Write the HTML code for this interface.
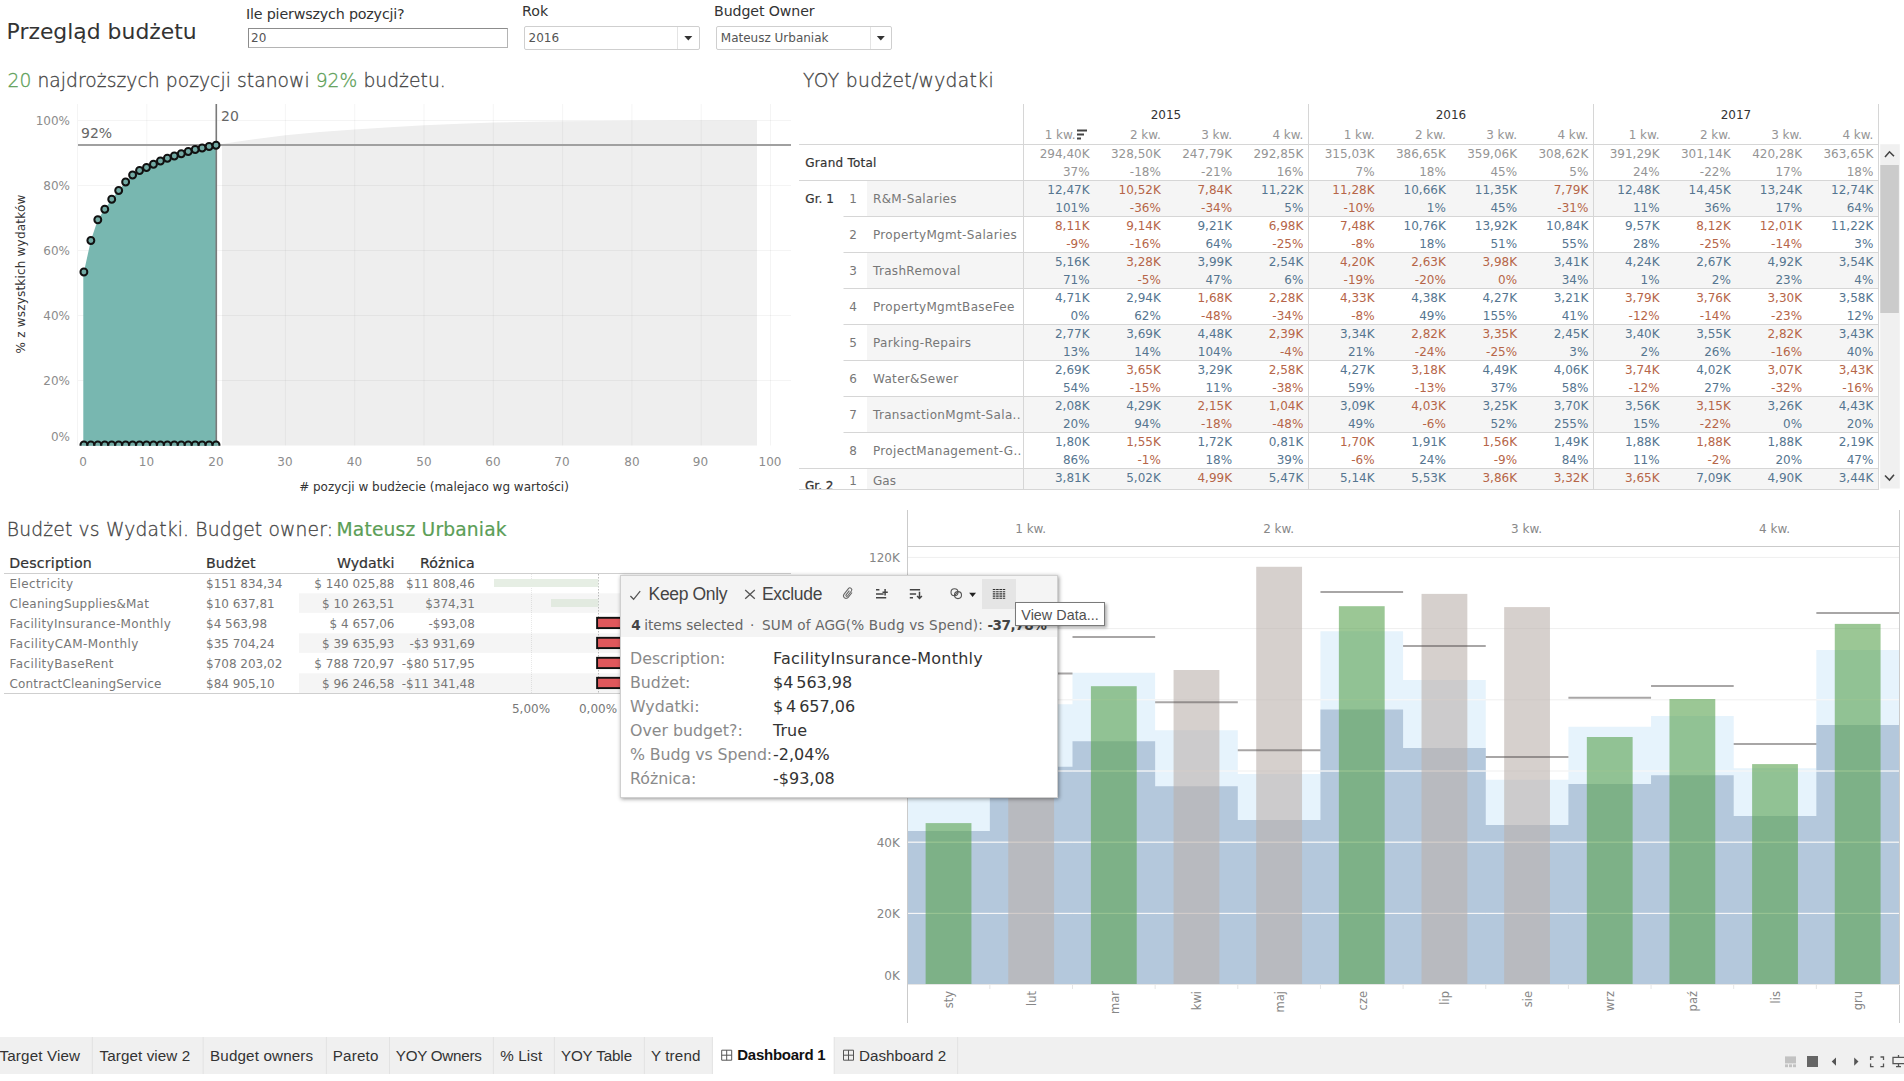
<!DOCTYPE html>
<html lang="pl"><head><meta charset="utf-8"><title>Przegląd budżetu</title>
<style>
html,body{margin:0;padding:0;background:#fff;}
body{width:1904px;height:1081px;position:relative;overflow:hidden;font-family:"DejaVu Sans","Liberation Sans",sans-serif;}
#page{position:absolute;left:0;top:0;width:1904px;height:1081px;overflow:hidden;}
#page div{position:absolute;white-space:pre;}
svg.layer{position:absolute;left:0;top:0;}
</style></head><body>
<div id="page">
<svg class="layer" width="1904" height="1081" viewBox="0 0 1904 1081">
<path d="M684.3 36 h8 l-4 4.6 z" fill="#333"/>
<path d="M876.8 36 h8 l-4 4.6 z" fill="#333"/>
<path d="M222 445.5 L222 144.1 L240 141.3 L260 138.5 L285.5 135.3 L320 132.1 L354.5 129.4 L390 127.2 L424.5 125.3 L460 123.7 L494 122.6 L530 121.8 L563 121.2 L632 120.7 L700 120.5 L757 120.4 L757 445.5 Z" fill="#eeeeee"/>
<line x1="77.50" y1="104.00" x2="77.50" y2="445.50" stroke="#000" stroke-width="1" stroke-opacity="0.045"/>
<line x1="146.80" y1="104.00" x2="146.80" y2="445.50" stroke="#000" stroke-width="1" stroke-opacity="0.045"/>
<line x1="216.10" y1="104.00" x2="216.10" y2="445.50" stroke="#000" stroke-width="1" stroke-opacity="0.045"/>
<line x1="285.40" y1="104.00" x2="285.40" y2="445.50" stroke="#000" stroke-width="1" stroke-opacity="0.045"/>
<line x1="354.70" y1="104.00" x2="354.70" y2="445.50" stroke="#000" stroke-width="1" stroke-opacity="0.045"/>
<line x1="424.00" y1="104.00" x2="424.00" y2="445.50" stroke="#000" stroke-width="1" stroke-opacity="0.045"/>
<line x1="493.30" y1="104.00" x2="493.30" y2="445.50" stroke="#000" stroke-width="1" stroke-opacity="0.045"/>
<line x1="562.60" y1="104.00" x2="562.60" y2="445.50" stroke="#000" stroke-width="1" stroke-opacity="0.045"/>
<line x1="631.90" y1="104.00" x2="631.90" y2="445.50" stroke="#000" stroke-width="1" stroke-opacity="0.045"/>
<line x1="701.20" y1="104.00" x2="701.20" y2="445.50" stroke="#000" stroke-width="1" stroke-opacity="0.045"/>
<line x1="770.50" y1="104.00" x2="770.50" y2="445.50" stroke="#000" stroke-width="1" stroke-opacity="0.045"/>
<line x1="78.00" y1="120.50" x2="791.00" y2="120.50" stroke="#000" stroke-width="1" stroke-opacity="0.045"/>
<line x1="78.00" y1="185.50" x2="791.00" y2="185.50" stroke="#000" stroke-width="1" stroke-opacity="0.045"/>
<line x1="78.00" y1="250.50" x2="791.00" y2="250.50" stroke="#000" stroke-width="1" stroke-opacity="0.045"/>
<line x1="78.00" y1="315.50" x2="791.00" y2="315.50" stroke="#000" stroke-width="1" stroke-opacity="0.045"/>
<line x1="78.00" y1="380.50" x2="791.00" y2="380.50" stroke="#000" stroke-width="1" stroke-opacity="0.045"/>
<path d="M83.3 445.5 L83.3 272.00 L83.90 272.00 L90.86 240.50 L97.81 219.75 L104.77 209.25 L111.72 199.25 L118.68 190.50 L125.63 182.00 L132.59 175.00 L139.54 170.50 L146.50 167.50 L153.45 164.25 L160.41 161.00 L167.36 158.25 L174.31 156.00 L181.27 153.75 L188.23 151.50 L195.18 149.50 L202.13 148.00 L209.09 146.50 L216.05 145.25 L216.5 445.5 Z" fill="#78b7b0"/>
<line x1="78.00" y1="145.00" x2="791.00" y2="145.00" stroke="#a0a0a0" stroke-width="2" />
<line x1="216.30" y1="104.00" x2="216.30" y2="445.50" stroke="#7a7a7a" stroke-width="1.6" />
<clipPath id="pc"><rect x="70" y="100" width="730" height="345.8"/></clipPath>
<g clip-path="url(#pc)" fill="#72aaa4" stroke="#111" stroke-width="2"><circle cx="83.90" cy="272.00" r="3.45"/><circle cx="90.86" cy="240.50" r="3.45"/><circle cx="97.81" cy="219.75" r="3.45"/><circle cx="104.77" cy="209.25" r="3.45"/><circle cx="111.72" cy="199.25" r="3.45"/><circle cx="118.68" cy="190.50" r="3.45"/><circle cx="125.63" cy="182.00" r="3.45"/><circle cx="132.59" cy="175.00" r="3.45"/><circle cx="139.54" cy="170.50" r="3.45"/><circle cx="146.50" cy="167.50" r="3.45"/><circle cx="153.45" cy="164.25" r="3.45"/><circle cx="160.41" cy="161.00" r="3.45"/><circle cx="167.36" cy="158.25" r="3.45"/><circle cx="174.31" cy="156.00" r="3.45"/><circle cx="181.27" cy="153.75" r="3.45"/><circle cx="188.23" cy="151.50" r="3.45"/><circle cx="195.18" cy="149.50" r="3.45"/><circle cx="202.13" cy="148.00" r="3.45"/><circle cx="209.09" cy="146.50" r="3.45"/><circle cx="216.05" cy="145.25" r="3.45"/><circle cx="83.90" cy="444.9" r="3.45"/><circle cx="90.86" cy="444.9" r="3.45"/><circle cx="97.81" cy="444.9" r="3.45"/><circle cx="104.77" cy="444.9" r="3.45"/><circle cx="111.72" cy="444.9" r="3.45"/><circle cx="118.68" cy="444.9" r="3.45"/><circle cx="125.63" cy="444.9" r="3.45"/><circle cx="132.59" cy="444.9" r="3.45"/><circle cx="139.54" cy="444.9" r="3.45"/><circle cx="146.50" cy="444.9" r="3.45"/><circle cx="153.45" cy="444.9" r="3.45"/><circle cx="160.41" cy="444.9" r="3.45"/><circle cx="167.36" cy="444.9" r="3.45"/><circle cx="174.31" cy="444.9" r="3.45"/><circle cx="181.27" cy="444.9" r="3.45"/><circle cx="188.23" cy="444.9" r="3.45"/><circle cx="195.18" cy="444.9" r="3.45"/><circle cx="202.13" cy="444.9" r="3.45"/><circle cx="209.09" cy="444.9" r="3.45"/><circle cx="216.05" cy="444.9" r="3.45"/></g>
<rect x="867.00" y="180.50" width="1011.50" height="36.00" fill="#f5f5f5" />
<rect x="867.00" y="252.50" width="1011.50" height="36.00" fill="#f5f5f5" />
<rect x="867.00" y="324.50" width="1011.50" height="36.00" fill="#f5f5f5" />
<rect x="867.00" y="396.50" width="1011.50" height="36.00" fill="#f5f5f5" />
<rect x="867.00" y="468.50" width="1011.50" height="20.50" fill="#f5f5f5" />
<line x1="799.00" y1="144.50" x2="1878.50" y2="144.50" stroke="#d6d6d6" stroke-width="1" />
<line x1="799.00" y1="180.50" x2="1878.50" y2="180.50" stroke="#d6d6d6" stroke-width="1" />
<line x1="843.50" y1="216.50" x2="1878.50" y2="216.50" stroke="#d6d6d6" stroke-width="1" />
<line x1="843.50" y1="252.50" x2="1878.50" y2="252.50" stroke="#d6d6d6" stroke-width="1" />
<line x1="843.50" y1="288.50" x2="1878.50" y2="288.50" stroke="#d6d6d6" stroke-width="1" />
<line x1="843.50" y1="324.50" x2="1878.50" y2="324.50" stroke="#d6d6d6" stroke-width="1" />
<line x1="843.50" y1="360.50" x2="1878.50" y2="360.50" stroke="#d6d6d6" stroke-width="1" />
<line x1="843.50" y1="396.50" x2="1878.50" y2="396.50" stroke="#d6d6d6" stroke-width="1" />
<line x1="843.50" y1="432.50" x2="1878.50" y2="432.50" stroke="#d6d6d6" stroke-width="1" />
<line x1="799.00" y1="468.50" x2="1878.50" y2="468.50" stroke="#d6d6d6" stroke-width="1" />
<line x1="799.00" y1="489.50" x2="1879.00" y2="489.50" stroke="#d6d6d6" stroke-width="1" />
<line x1="1023.50" y1="104.00" x2="1023.50" y2="489.00" stroke="#d6d6d6" stroke-width="1" />
<line x1="1308.50" y1="104.00" x2="1308.50" y2="489.00" stroke="#d6d6d6" stroke-width="1" />
<line x1="1593.50" y1="104.00" x2="1593.50" y2="489.00" stroke="#d6d6d6" stroke-width="1" />
<line x1="1878.50" y1="104.00" x2="1878.50" y2="489.00" stroke="#d6d6d6" stroke-width="1" />
<path d="M1077 130.5h10M1077 134.5h7M1077 138.5h4" stroke="#444" stroke-width="1.8" fill="none"/>
<rect x="1880.20" y="144.20" width="19.60" height="344.30" fill="#f0f0f0" />
<rect x="1880.30" y="165.00" width="18.60" height="148.00" fill="#cbcbcb" />
<path d="M1885 157l4.5-5.2 4.5 4.5M1885 475.5l4.5 4.5 4.5-5.2" stroke="#444" stroke-width="1.6" fill="none"/>
<rect x="299.00" y="593.30" width="492.00" height="19.60" fill="#f5f5f5" />
<rect x="299.00" y="633.30" width="492.00" height="19.60" fill="#f5f5f5" />
<rect x="299.00" y="673.30" width="492.00" height="19.60" fill="#f5f5f5" />
<line x1="531.50" y1="574.00" x2="531.50" y2="693.00" stroke="#000" stroke-width="1" stroke-opacity="0.09" stroke-dasharray="1 1"/>
<line x1="598.50" y1="574.00" x2="598.50" y2="693.00" stroke="#bbb" stroke-width="1" stroke-dasharray="1.5 1.5"/>
<line x1="4.00" y1="573.50" x2="791.00" y2="573.50" stroke="#cfcfcf" stroke-width="1" />
<line x1="4.00" y1="693.50" x2="791.00" y2="693.50" stroke="#cfcfcf" stroke-width="1" />
<rect x="494.00" y="579.00" width="104.30" height="8.00" fill="#e6eee4" />
<rect x="551.00" y="599.00" width="47.30" height="8.00" fill="#e2eae0" />
<rect x="597.1" y="617.8" width="40" height="10.3" fill="#e0585c" stroke="#111" stroke-width="1.9"/>
<rect x="597.1" y="637.8" width="40" height="10.3" fill="#e0585c" stroke="#111" stroke-width="1.9"/>
<rect x="597.1" y="657.8" width="40" height="10.3" fill="#e0585c" stroke="#111" stroke-width="1.9"/>
<rect x="597.1" y="677.8" width="40" height="10.3" fill="#e0585c" stroke="#111" stroke-width="1.9"/>
<path d="M907.20 984.00 L907.20 797.00 L989.85 797.00 L989.85 704.30 L1072.50 704.30 L1072.50 672.80 L1155.15 672.80 L1155.15 730.20 L1237.80 730.20 L1237.80 774.00 L1320.45 774.00 L1320.45 631.20 L1403.10 631.20 L1403.10 680.00 L1485.75 680.00 L1485.75 779.80 L1568.40 779.80 L1568.40 726.80 L1651.05 726.80 L1651.05 716.00 L1733.70 716.00 L1733.70 768.20 L1816.35 768.20 L1816.35 650.00 L1899.00 650.00 L1899.00 984.00 Z" fill="#e6f3fc"/>
<path d="M907.20 984.00 L907.20 831.10 L989.85 831.10 L989.85 766.70 L1072.50 766.70 L1072.50 741.30 L1155.15 741.30 L1155.15 786.20 L1237.80 786.20 L1237.80 820.00 L1320.45 820.00 L1320.45 709.40 L1403.10 709.40 L1403.10 748.00 L1485.75 748.00 L1485.75 825.00 L1568.40 825.00 L1568.40 784.00 L1651.05 784.00 L1651.05 775.20 L1733.70 775.20 L1733.70 815.90 L1816.35 815.90 L1816.35 724.90 L1899.00 724.90 L1899.00 984.00 Z" fill="#b4c8dc"/>
<line x1="907.20" y1="913.40" x2="1899.00" y2="913.40" stroke="#efefef" stroke-width="1" />
<line x1="907.20" y1="913.40" x2="989.85" y2="913.40" stroke="#ffffff" stroke-width="1" stroke-opacity="0.62"/>
<line x1="989.85" y1="913.40" x2="1072.50" y2="913.40" stroke="#ffffff" stroke-width="1" stroke-opacity="0.62"/>
<line x1="1072.50" y1="913.40" x2="1155.15" y2="913.40" stroke="#ffffff" stroke-width="1" stroke-opacity="0.62"/>
<line x1="1155.15" y1="913.40" x2="1237.80" y2="913.40" stroke="#ffffff" stroke-width="1" stroke-opacity="0.62"/>
<line x1="1237.80" y1="913.40" x2="1320.45" y2="913.40" stroke="#ffffff" stroke-width="1" stroke-opacity="0.62"/>
<line x1="1320.45" y1="913.40" x2="1403.10" y2="913.40" stroke="#ffffff" stroke-width="1" stroke-opacity="0.62"/>
<line x1="1403.10" y1="913.40" x2="1485.75" y2="913.40" stroke="#ffffff" stroke-width="1" stroke-opacity="0.62"/>
<line x1="1485.75" y1="913.40" x2="1568.40" y2="913.40" stroke="#ffffff" stroke-width="1" stroke-opacity="0.62"/>
<line x1="1568.40" y1="913.40" x2="1651.05" y2="913.40" stroke="#ffffff" stroke-width="1" stroke-opacity="0.62"/>
<line x1="1651.05" y1="913.40" x2="1733.70" y2="913.40" stroke="#ffffff" stroke-width="1" stroke-opacity="0.62"/>
<line x1="1733.70" y1="913.40" x2="1816.35" y2="913.40" stroke="#ffffff" stroke-width="1" stroke-opacity="0.62"/>
<line x1="1816.35" y1="913.40" x2="1899.00" y2="913.40" stroke="#ffffff" stroke-width="1" stroke-opacity="0.62"/>
<line x1="907.20" y1="842.20" x2="1899.00" y2="842.20" stroke="#efefef" stroke-width="1" />
<line x1="907.20" y1="842.20" x2="989.85" y2="842.20" stroke="#ffffff" stroke-width="1" stroke-opacity="0.62"/>
<line x1="989.85" y1="842.20" x2="1072.50" y2="842.20" stroke="#ffffff" stroke-width="1" stroke-opacity="0.62"/>
<line x1="1072.50" y1="842.20" x2="1155.15" y2="842.20" stroke="#ffffff" stroke-width="1" stroke-opacity="0.62"/>
<line x1="1155.15" y1="842.20" x2="1237.80" y2="842.20" stroke="#ffffff" stroke-width="1" stroke-opacity="0.62"/>
<line x1="1237.80" y1="842.20" x2="1320.45" y2="842.20" stroke="#ffffff" stroke-width="1" stroke-opacity="0.62"/>
<line x1="1320.45" y1="842.20" x2="1403.10" y2="842.20" stroke="#ffffff" stroke-width="1" stroke-opacity="0.62"/>
<line x1="1403.10" y1="842.20" x2="1485.75" y2="842.20" stroke="#ffffff" stroke-width="1" stroke-opacity="0.62"/>
<line x1="1485.75" y1="842.20" x2="1568.40" y2="842.20" stroke="#ffffff" stroke-width="1" stroke-opacity="0.62"/>
<line x1="1568.40" y1="842.20" x2="1651.05" y2="842.20" stroke="#ffffff" stroke-width="1" stroke-opacity="0.62"/>
<line x1="1651.05" y1="842.20" x2="1733.70" y2="842.20" stroke="#ffffff" stroke-width="1" stroke-opacity="0.62"/>
<line x1="1733.70" y1="842.20" x2="1816.35" y2="842.20" stroke="#ffffff" stroke-width="1" stroke-opacity="0.62"/>
<line x1="1816.35" y1="842.20" x2="1899.00" y2="842.20" stroke="#ffffff" stroke-width="1" stroke-opacity="0.62"/>
<line x1="907.20" y1="771.00" x2="1899.00" y2="771.00" stroke="#efefef" stroke-width="1" />
<line x1="989.85" y1="771.00" x2="1072.50" y2="771.00" stroke="#ffffff" stroke-width="1" stroke-opacity="0.62"/>
<line x1="1072.50" y1="771.00" x2="1155.15" y2="771.00" stroke="#ffffff" stroke-width="1" stroke-opacity="0.62"/>
<line x1="1155.15" y1="771.00" x2="1237.80" y2="771.00" stroke="#ffffff" stroke-width="1" stroke-opacity="0.62"/>
<line x1="1320.45" y1="771.00" x2="1403.10" y2="771.00" stroke="#ffffff" stroke-width="1" stroke-opacity="0.62"/>
<line x1="1403.10" y1="771.00" x2="1485.75" y2="771.00" stroke="#ffffff" stroke-width="1" stroke-opacity="0.62"/>
<line x1="1568.40" y1="771.00" x2="1651.05" y2="771.00" stroke="#ffffff" stroke-width="1" stroke-opacity="0.62"/>
<line x1="1651.05" y1="771.00" x2="1733.70" y2="771.00" stroke="#ffffff" stroke-width="1" stroke-opacity="0.62"/>
<line x1="1733.70" y1="771.00" x2="1816.35" y2="771.00" stroke="#ffffff" stroke-width="1" stroke-opacity="0.62"/>
<line x1="1816.35" y1="771.00" x2="1899.00" y2="771.00" stroke="#ffffff" stroke-width="1" stroke-opacity="0.62"/>
<line x1="907.20" y1="699.80" x2="1899.00" y2="699.80" stroke="#efefef" stroke-width="1" />
<line x1="1072.50" y1="699.80" x2="1155.15" y2="699.80" stroke="#ffffff" stroke-width="1" stroke-opacity="0.62"/>
<line x1="1320.45" y1="699.80" x2="1403.10" y2="699.80" stroke="#ffffff" stroke-width="1" stroke-opacity="0.62"/>
<line x1="1403.10" y1="699.80" x2="1485.75" y2="699.80" stroke="#ffffff" stroke-width="1" stroke-opacity="0.62"/>
<line x1="1816.35" y1="699.80" x2="1899.00" y2="699.80" stroke="#ffffff" stroke-width="1" stroke-opacity="0.62"/>
<line x1="907.20" y1="628.60" x2="1899.00" y2="628.60" stroke="#efefef" stroke-width="1" />
<line x1="907.20" y1="557.40" x2="1899.00" y2="557.40" stroke="#efefef" stroke-width="1" />
<rect x="925.63" y="823.10" width="45.80" height="160.90" fill="#59a14f" fill-opacity="0.6"/>
<rect x="1008.27" y="690.00" width="45.80" height="294.00" fill="#bab0ac" fill-opacity="0.6"/>
<line x1="989.85" y1="673.50" x2="1072.50" y2="673.50" stroke="#4a4444" stroke-width="2" stroke-opacity="0.48"/>
<rect x="1090.92" y="686.20" width="45.80" height="297.80" fill="#59a14f" fill-opacity="0.6"/>
<line x1="1072.50" y1="636.90" x2="1155.15" y2="636.90" stroke="#4a4444" stroke-width="2" stroke-opacity="0.48"/>
<rect x="1173.58" y="670.00" width="45.80" height="314.00" fill="#bab0ac" fill-opacity="0.6"/>
<line x1="1155.15" y1="702.20" x2="1237.80" y2="702.20" stroke="#4a4444" stroke-width="2" stroke-opacity="0.48"/>
<rect x="1256.23" y="566.80" width="45.80" height="417.20" fill="#bab0ac" fill-opacity="0.6"/>
<line x1="1237.80" y1="750.20" x2="1320.45" y2="750.20" stroke="#4a4444" stroke-width="2" stroke-opacity="0.48"/>
<rect x="1338.88" y="606.20" width="45.80" height="377.80" fill="#59a14f" fill-opacity="0.6"/>
<line x1="1320.45" y1="592.00" x2="1403.10" y2="592.00" stroke="#4a4444" stroke-width="2" stroke-opacity="0.48"/>
<rect x="1421.53" y="593.90" width="45.80" height="390.10" fill="#bab0ac" fill-opacity="0.6"/>
<line x1="1403.10" y1="646.10" x2="1485.75" y2="646.10" stroke="#4a4444" stroke-width="2" stroke-opacity="0.48"/>
<rect x="1504.17" y="607.10" width="45.80" height="376.90" fill="#bab0ac" fill-opacity="0.6"/>
<line x1="1485.75" y1="757.00" x2="1568.40" y2="757.00" stroke="#4a4444" stroke-width="2" stroke-opacity="0.48"/>
<rect x="1586.83" y="737.00" width="45.80" height="247.00" fill="#59a14f" fill-opacity="0.6"/>
<line x1="1568.40" y1="697.80" x2="1651.05" y2="697.80" stroke="#4a4444" stroke-width="2" stroke-opacity="0.48"/>
<rect x="1669.48" y="699.00" width="45.80" height="285.00" fill="#59a14f" fill-opacity="0.6"/>
<line x1="1651.05" y1="686.00" x2="1733.70" y2="686.00" stroke="#4a4444" stroke-width="2" stroke-opacity="0.48"/>
<rect x="1752.12" y="764.10" width="45.80" height="219.90" fill="#59a14f" fill-opacity="0.6"/>
<line x1="1733.70" y1="744.10" x2="1816.35" y2="744.10" stroke="#4a4444" stroke-width="2" stroke-opacity="0.48"/>
<rect x="1834.78" y="623.90" width="45.80" height="360.10" fill="#59a14f" fill-opacity="0.6"/>
<line x1="1816.35" y1="613.10" x2="1899.00" y2="613.10" stroke="#4a4444" stroke-width="2" stroke-opacity="0.48"/>
<line x1="907.50" y1="510.00" x2="907.50" y2="1023.00" stroke="#cbcbcb" stroke-width="1" />
<line x1="908.00" y1="546.50" x2="1900.00" y2="546.50" stroke="#cbcbcb" stroke-width="1" />
<line x1="1899.50" y1="510.00" x2="1899.50" y2="1023.00" stroke="#cbcbcb" stroke-width="1" />
<line x1="908.00" y1="984.50" x2="1900.00" y2="984.50" stroke="#e6e6e6" stroke-width="1" />
<line x1="989.85" y1="984.50" x2="989.85" y2="989.00" stroke="#e6e6e6" stroke-width="1" />
<line x1="1072.50" y1="984.50" x2="1072.50" y2="989.00" stroke="#e6e6e6" stroke-width="1" />
<line x1="1155.15" y1="984.50" x2="1155.15" y2="989.00" stroke="#e6e6e6" stroke-width="1" />
<line x1="1237.80" y1="984.50" x2="1237.80" y2="989.00" stroke="#e6e6e6" stroke-width="1" />
<line x1="1320.45" y1="984.50" x2="1320.45" y2="989.00" stroke="#e6e6e6" stroke-width="1" />
<line x1="1403.10" y1="984.50" x2="1403.10" y2="989.00" stroke="#e6e6e6" stroke-width="1" />
<line x1="1485.75" y1="984.50" x2="1485.75" y2="989.00" stroke="#e6e6e6" stroke-width="1" />
<line x1="1568.40" y1="984.50" x2="1568.40" y2="989.00" stroke="#e6e6e6" stroke-width="1" />
<line x1="1651.05" y1="984.50" x2="1651.05" y2="989.00" stroke="#e6e6e6" stroke-width="1" />
<line x1="1733.70" y1="984.50" x2="1733.70" y2="989.00" stroke="#e6e6e6" stroke-width="1" />
<line x1="1816.35" y1="984.50" x2="1816.35" y2="989.00" stroke="#e6e6e6" stroke-width="1" />
<rect x="0.00" y="1037.00" width="1904.00" height="37.00" fill="#f0f0f0" />
<rect x="712.40" y="1037.00" width="121.80" height="37.00" fill="#ffffff" />
<line x1="92.30" y1="1037.00" x2="92.30" y2="1074.00" stroke="#e2e2e2" stroke-width="1" />
<line x1="203.20" y1="1037.00" x2="203.20" y2="1074.00" stroke="#e2e2e2" stroke-width="1" />
<line x1="326.40" y1="1037.00" x2="326.40" y2="1074.00" stroke="#e2e2e2" stroke-width="1" />
<line x1="389.50" y1="1037.00" x2="389.50" y2="1074.00" stroke="#e2e2e2" stroke-width="1" />
<line x1="493.40" y1="1037.00" x2="493.40" y2="1074.00" stroke="#e2e2e2" stroke-width="1" />
<line x1="554.40" y1="1037.00" x2="554.40" y2="1074.00" stroke="#e2e2e2" stroke-width="1" />
<line x1="644.40" y1="1037.00" x2="644.40" y2="1074.00" stroke="#e2e2e2" stroke-width="1" />
<line x1="712.40" y1="1037.00" x2="712.40" y2="1074.00" stroke="#e2e2e2" stroke-width="1" />
<line x1="834.20" y1="1037.00" x2="834.20" y2="1074.00" stroke="#e2e2e2" stroke-width="1" />
<line x1="957.70" y1="1037.00" x2="957.70" y2="1074.00" stroke="#e2e2e2" stroke-width="1" />
<path d="M721.7 1050.2h10v10h-10zM726.7 1050.2v10M721.7 1055.2h10" fill="none" stroke="#555" stroke-width="1"/>
<path d="M843.5 1050.2h10v10h-10zM848.5 1050.2v10M843.5 1055.2h10" fill="none" stroke="#555" stroke-width="1"/>
<rect x="1785.00" y="1056.40" width="11.00" height="7.00" fill="#c2c2c2" />
<rect x="1785.00" y="1064.40" width="3.00" height="2.80" fill="#c2c2c2" />
<rect x="1789.00" y="1064.40" width="3.00" height="2.80" fill="#c2c2c2" />
<rect x="1793.00" y="1064.40" width="3.00" height="2.80" fill="#c2c2c2" />
<rect x="1807.00" y="1056.00" width="11.00" height="11.00" fill="#666" />
<path d="M1836 1057.4v8.4l-4.3-4.2zM1854.2 1057.4v8.4l4.3-4.2z" fill="#555"/>
<path d="M1870.6 1060v-3h3M1880.5 1057h3v3M1883.5 1063.6v3h-3M1873.6 1066.6h-3v-3" fill="none" stroke="#555" stroke-width="1.3"/>
<path d="M1893 1057.3h12v6.4h-12zM1898.5 1055v2M1898.5 1063.7v2.8M1896 1066.6h5" fill="none" stroke="#555" stroke-width="1.3"/>
</svg>
<div style="top:16.50px;line-height:30px;font-size:21.9px;color:#333333;left:6.60px;">Przegląd budżetu</div>
<div style="top:4.00px;line-height:20px;font-size:14.3px;color:#333333;left:246.00px;letter-spacing:-0.196px;">Ile pierwszych pozycji?</div>
<div style="left:247.5px;top:28px;width:258px;height:18px;border:1px solid #b4b4b4;border-top-color:#8c8c8c;border-left-color:#8c8c8c;box-sizing:content-box;background:#fff"></div>
<div style="top:28.00px;line-height:20px;font-size:12px;color:#555;left:251.00px;">20</div>
<div style="top:0.50px;line-height:20px;font-size:14.2px;color:#333333;left:522.00px;">Rok</div>
<div style="top:0.50px;line-height:20px;font-size:14.2px;color:#333333;left:714.00px;letter-spacing:-0.106px;">Budget Owner</div>
<div style="left:524px;top:25.5px;width:173.5px;height:22px;border:1px solid #cfcfcf;border-radius:2px"></div>
<div style="left:677.0px;top:26.5px;width:1px;height:22px;background:#e4e4e4"></div>
<div style="top:28.00px;line-height:20px;font-size:12px;color:#555;left:528.50px;">2016</div>
<div style="left:716.3px;top:25.5px;width:173.70000000000005px;height:22px;border:1px solid #cfcfcf;border-radius:2px"></div>
<div style="left:869.5px;top:26.5px;width:1px;height:22px;background:#e4e4e4"></div>
<div style="top:28.00px;line-height:20px;font-size:12px;color:#555;left:720.80px;">Mateusz Urbaniak</div>
<div style="top:65.70px;line-height:30px;font-size:18.7px;color:#444;left:7.50px;font-weight:200;-webkit-text-stroke:0.3px currentColor;letter-spacing:0.06px;"><span style="color:#5b9e56">20</span> najdroższych pozycji stanowi <span style="color:#5b9e56">92%</span> budżetu.</div>
<div style="top:65.70px;line-height:30px;font-size:18.7px;color:#444;left:803.00px;letter-spacing:0.333px;font-weight:200;-webkit-text-stroke:0.3px currentColor;">YOY budżet/wydatki</div>
<div style="top:110.50px;line-height:20px;font-size:12px;color:#8c8c8c;right:1834.00px;">100%</div>
<div style="top:175.50px;line-height:20px;font-size:12px;color:#8c8c8c;right:1834.00px;">80%</div>
<div style="top:240.50px;line-height:20px;font-size:12px;color:#8c8c8c;right:1834.00px;">60%</div>
<div style="top:305.50px;line-height:20px;font-size:12px;color:#8c8c8c;right:1834.00px;">40%</div>
<div style="top:370.50px;line-height:20px;font-size:12px;color:#8c8c8c;right:1834.00px;">20%</div>
<div style="top:426.50px;line-height:20px;font-size:12px;color:#8c8c8c;right:1834.00px;">0%</div>
<div style="top:451.50px;line-height:20px;font-size:12px;color:#8c8c8c;left:-317.00px;width:800px;text-align:center;">0</div>
<div style="top:451.50px;line-height:20px;font-size:12px;color:#8c8c8c;left:-253.50px;width:800px;text-align:center;">10</div>
<div style="top:451.50px;line-height:20px;font-size:12px;color:#8c8c8c;left:-184.00px;width:800px;text-align:center;">20</div>
<div style="top:451.50px;line-height:20px;font-size:12px;color:#8c8c8c;left:-115.00px;width:800px;text-align:center;">30</div>
<div style="top:451.50px;line-height:20px;font-size:12px;color:#8c8c8c;left:-45.50px;width:800px;text-align:center;">40</div>
<div style="top:451.50px;line-height:20px;font-size:12px;color:#8c8c8c;left:24.00px;width:800px;text-align:center;">50</div>
<div style="top:451.50px;line-height:20px;font-size:12px;color:#8c8c8c;left:93.00px;width:800px;text-align:center;">60</div>
<div style="top:451.50px;line-height:20px;font-size:12px;color:#8c8c8c;left:162.00px;width:800px;text-align:center;">70</div>
<div style="top:451.50px;line-height:20px;font-size:12px;color:#8c8c8c;left:232.00px;width:800px;text-align:center;">80</div>
<div style="top:451.50px;line-height:20px;font-size:12px;color:#8c8c8c;left:300.50px;width:800px;text-align:center;">90</div>
<div style="top:451.50px;line-height:20px;font-size:12px;color:#8c8c8c;left:370.00px;width:800px;text-align:center;">100</div>
<div style="top:476.50px;line-height:20px;font-size:12px;color:#333;left:34.00px;width:800px;text-align:center;"># pozycji w budżecie (malejaco wg wartości)</div>
<div style="left:21px;top:273.5px;width:0;height:0;"><div style="left:-200px;top:-10px;width:400px;line-height:20px;text-align:center;font-size:12px;color:#333;letter-spacing:0.2px;transform:rotate(-90deg);">% z wszystkich wydatków</div></div>
<div style="top:123.00px;line-height:20px;font-size:14px;color:#666;left:81.00px;">92%</div>
<div style="top:106.00px;line-height:20px;font-size:14px;color:#666;left:221.00px;">20</div>
<div style="top:104.50px;line-height:20px;font-size:12px;color:#333;left:766.00px;width:800px;text-align:center;">2015</div>
<div style="top:124.80px;line-height:20px;font-size:12px;color:#959595;right:828.45px;">1 kw.</div>
<div style="top:124.80px;line-height:20px;font-size:12px;color:#959595;right:743.20px;">2 kw.</div>
<div style="top:124.80px;line-height:20px;font-size:12px;color:#959595;right:671.95px;">3 kw.</div>
<div style="top:124.80px;line-height:20px;font-size:12px;color:#959595;right:600.70px;">4 kw.</div>
<div style="top:104.50px;line-height:20px;font-size:12px;color:#333;left:1051.00px;width:800px;text-align:center;">2016</div>
<div style="top:124.80px;line-height:20px;font-size:12px;color:#959595;right:529.45px;">1 kw.</div>
<div style="top:124.80px;line-height:20px;font-size:12px;color:#959595;right:458.20px;">2 kw.</div>
<div style="top:124.80px;line-height:20px;font-size:12px;color:#959595;right:386.95px;">3 kw.</div>
<div style="top:124.80px;line-height:20px;font-size:12px;color:#959595;right:315.70px;">4 kw.</div>
<div style="top:104.50px;line-height:20px;font-size:12px;color:#333;left:1336.00px;width:800px;text-align:center;">2017</div>
<div style="top:124.80px;line-height:20px;font-size:12px;color:#959595;right:244.45px;">1 kw.</div>
<div style="top:124.80px;line-height:20px;font-size:12px;color:#959595;right:173.20px;">2 kw.</div>
<div style="top:124.80px;line-height:20px;font-size:12px;color:#959595;right:101.95px;">3 kw.</div>
<div style="top:124.80px;line-height:20px;font-size:12px;color:#959595;right:30.70px;">4 kw.</div>
<div style="top:152.80px;line-height:20px;font-size:12px;color:#333;left:805.30px;letter-spacing:0.249px;-webkit-text-stroke:0.2px #333;">Grand Total</div>
<div style="top:143.70px;line-height:20px;font-size:12px;color:#959595;right:814.45px;">294,40K</div>
<div style="top:161.70px;line-height:20px;font-size:12px;color:#959595;right:814.45px;">37%</div>
<div style="top:143.70px;line-height:20px;font-size:12px;color:#959595;right:743.20px;">328,50K</div>
<div style="top:161.70px;line-height:20px;font-size:12px;color:#959595;right:743.20px;">-18%</div>
<div style="top:143.70px;line-height:20px;font-size:12px;color:#959595;right:671.95px;">247,79K</div>
<div style="top:161.70px;line-height:20px;font-size:12px;color:#959595;right:671.95px;">-21%</div>
<div style="top:143.70px;line-height:20px;font-size:12px;color:#959595;right:600.70px;">292,85K</div>
<div style="top:161.70px;line-height:20px;font-size:12px;color:#959595;right:600.70px;">16%</div>
<div style="top:143.70px;line-height:20px;font-size:12px;color:#959595;right:529.45px;">315,03K</div>
<div style="top:161.70px;line-height:20px;font-size:12px;color:#959595;right:529.45px;">7%</div>
<div style="top:143.70px;line-height:20px;font-size:12px;color:#959595;right:458.20px;">386,65K</div>
<div style="top:161.70px;line-height:20px;font-size:12px;color:#959595;right:458.20px;">18%</div>
<div style="top:143.70px;line-height:20px;font-size:12px;color:#959595;right:386.95px;">359,06K</div>
<div style="top:161.70px;line-height:20px;font-size:12px;color:#959595;right:386.95px;">45%</div>
<div style="top:143.70px;line-height:20px;font-size:12px;color:#959595;right:315.70px;">308,62K</div>
<div style="top:161.70px;line-height:20px;font-size:12px;color:#959595;right:315.70px;">5%</div>
<div style="top:143.70px;line-height:20px;font-size:12px;color:#959595;right:244.45px;">391,29K</div>
<div style="top:161.70px;line-height:20px;font-size:12px;color:#959595;right:244.45px;">24%</div>
<div style="top:143.70px;line-height:20px;font-size:12px;color:#959595;right:173.20px;">301,14K</div>
<div style="top:161.70px;line-height:20px;font-size:12px;color:#959595;right:173.20px;">-22%</div>
<div style="top:143.70px;line-height:20px;font-size:12px;color:#959595;right:101.95px;">420,28K</div>
<div style="top:161.70px;line-height:20px;font-size:12px;color:#959595;right:101.95px;">17%</div>
<div style="top:143.70px;line-height:20px;font-size:12px;color:#959595;right:30.70px;">363,65K</div>
<div style="top:161.70px;line-height:20px;font-size:12px;color:#959595;right:30.70px;">18%</div>
<div style="top:188.80px;line-height:20px;font-size:12px;color:#333;left:805.30px;letter-spacing:0.059px;-webkit-text-stroke:0.2px #333;">Gr. 1</div>
<div style="top:188.80px;line-height:20px;font-size:12px;color:#777;left:453.00px;width:800px;text-align:center;">1</div>
<div style="top:188.80px;line-height:20px;font-size:12px;color:#777;left:873.00px;letter-spacing:0.33px;">R&amp;M-Salaries</div>
<div style="top:179.70px;line-height:20px;font-size:12px;color:#557590;right:814.45px;">12,47K</div>
<div style="top:197.70px;line-height:20px;font-size:12px;color:#557590;right:814.45px;">101%</div>
<div style="top:179.70px;line-height:20px;font-size:12px;color:#b66548;right:743.20px;">10,52K</div>
<div style="top:197.70px;line-height:20px;font-size:12px;color:#b66548;right:743.20px;">-36%</div>
<div style="top:179.70px;line-height:20px;font-size:12px;color:#b66548;right:671.95px;">7,84K</div>
<div style="top:197.70px;line-height:20px;font-size:12px;color:#b66548;right:671.95px;">-34%</div>
<div style="top:179.70px;line-height:20px;font-size:12px;color:#557590;right:600.70px;">11,22K</div>
<div style="top:197.70px;line-height:20px;font-size:12px;color:#557590;right:600.70px;">5%</div>
<div style="top:179.70px;line-height:20px;font-size:12px;color:#b66548;right:529.45px;">11,28K</div>
<div style="top:197.70px;line-height:20px;font-size:12px;color:#b66548;right:529.45px;">-10%</div>
<div style="top:179.70px;line-height:20px;font-size:12px;color:#557590;right:458.20px;">10,66K</div>
<div style="top:197.70px;line-height:20px;font-size:12px;color:#557590;right:458.20px;">1%</div>
<div style="top:179.70px;line-height:20px;font-size:12px;color:#557590;right:386.95px;">11,35K</div>
<div style="top:197.70px;line-height:20px;font-size:12px;color:#557590;right:386.95px;">45%</div>
<div style="top:179.70px;line-height:20px;font-size:12px;color:#b66548;right:315.70px;">7,79K</div>
<div style="top:197.70px;line-height:20px;font-size:12px;color:#b66548;right:315.70px;">-31%</div>
<div style="top:179.70px;line-height:20px;font-size:12px;color:#557590;right:244.45px;">12,48K</div>
<div style="top:197.70px;line-height:20px;font-size:12px;color:#557590;right:244.45px;">11%</div>
<div style="top:179.70px;line-height:20px;font-size:12px;color:#557590;right:173.20px;">14,45K</div>
<div style="top:197.70px;line-height:20px;font-size:12px;color:#557590;right:173.20px;">36%</div>
<div style="top:179.70px;line-height:20px;font-size:12px;color:#557590;right:101.95px;">13,24K</div>
<div style="top:197.70px;line-height:20px;font-size:12px;color:#557590;right:101.95px;">17%</div>
<div style="top:179.70px;line-height:20px;font-size:12px;color:#557590;right:30.70px;">12,74K</div>
<div style="top:197.70px;line-height:20px;font-size:12px;color:#557590;right:30.70px;">64%</div>
<div style="top:224.80px;line-height:20px;font-size:12px;color:#777;left:453.00px;width:800px;text-align:center;">2</div>
<div style="top:224.80px;line-height:20px;font-size:12px;color:#777;left:873.00px;letter-spacing:0.33px;">PropertyMgmt-Salaries</div>
<div style="top:215.70px;line-height:20px;font-size:12px;color:#b66548;right:814.45px;">8,11K</div>
<div style="top:233.70px;line-height:20px;font-size:12px;color:#b66548;right:814.45px;">-9%</div>
<div style="top:215.70px;line-height:20px;font-size:12px;color:#b66548;right:743.20px;">9,14K</div>
<div style="top:233.70px;line-height:20px;font-size:12px;color:#b66548;right:743.20px;">-16%</div>
<div style="top:215.70px;line-height:20px;font-size:12px;color:#557590;right:671.95px;">9,21K</div>
<div style="top:233.70px;line-height:20px;font-size:12px;color:#557590;right:671.95px;">64%</div>
<div style="top:215.70px;line-height:20px;font-size:12px;color:#b66548;right:600.70px;">6,98K</div>
<div style="top:233.70px;line-height:20px;font-size:12px;color:#b66548;right:600.70px;">-25%</div>
<div style="top:215.70px;line-height:20px;font-size:12px;color:#b66548;right:529.45px;">7,48K</div>
<div style="top:233.70px;line-height:20px;font-size:12px;color:#b66548;right:529.45px;">-8%</div>
<div style="top:215.70px;line-height:20px;font-size:12px;color:#557590;right:458.20px;">10,76K</div>
<div style="top:233.70px;line-height:20px;font-size:12px;color:#557590;right:458.20px;">18%</div>
<div style="top:215.70px;line-height:20px;font-size:12px;color:#557590;right:386.95px;">13,92K</div>
<div style="top:233.70px;line-height:20px;font-size:12px;color:#557590;right:386.95px;">51%</div>
<div style="top:215.70px;line-height:20px;font-size:12px;color:#557590;right:315.70px;">10,84K</div>
<div style="top:233.70px;line-height:20px;font-size:12px;color:#557590;right:315.70px;">55%</div>
<div style="top:215.70px;line-height:20px;font-size:12px;color:#557590;right:244.45px;">9,57K</div>
<div style="top:233.70px;line-height:20px;font-size:12px;color:#557590;right:244.45px;">28%</div>
<div style="top:215.70px;line-height:20px;font-size:12px;color:#b66548;right:173.20px;">8,12K</div>
<div style="top:233.70px;line-height:20px;font-size:12px;color:#b66548;right:173.20px;">-25%</div>
<div style="top:215.70px;line-height:20px;font-size:12px;color:#b66548;right:101.95px;">12,01K</div>
<div style="top:233.70px;line-height:20px;font-size:12px;color:#b66548;right:101.95px;">-14%</div>
<div style="top:215.70px;line-height:20px;font-size:12px;color:#557590;right:30.70px;">11,22K</div>
<div style="top:233.70px;line-height:20px;font-size:12px;color:#557590;right:30.70px;">3%</div>
<div style="top:260.80px;line-height:20px;font-size:12px;color:#777;left:453.00px;width:800px;text-align:center;">3</div>
<div style="top:260.80px;line-height:20px;font-size:12px;color:#777;left:873.00px;letter-spacing:0.33px;">TrashRemoval</div>
<div style="top:251.70px;line-height:20px;font-size:12px;color:#557590;right:814.45px;">5,16K</div>
<div style="top:269.70px;line-height:20px;font-size:12px;color:#557590;right:814.45px;">71%</div>
<div style="top:251.70px;line-height:20px;font-size:12px;color:#b66548;right:743.20px;">3,28K</div>
<div style="top:269.70px;line-height:20px;font-size:12px;color:#b66548;right:743.20px;">-5%</div>
<div style="top:251.70px;line-height:20px;font-size:12px;color:#557590;right:671.95px;">3,99K</div>
<div style="top:269.70px;line-height:20px;font-size:12px;color:#557590;right:671.95px;">47%</div>
<div style="top:251.70px;line-height:20px;font-size:12px;color:#557590;right:600.70px;">2,54K</div>
<div style="top:269.70px;line-height:20px;font-size:12px;color:#557590;right:600.70px;">6%</div>
<div style="top:251.70px;line-height:20px;font-size:12px;color:#b66548;right:529.45px;">4,20K</div>
<div style="top:269.70px;line-height:20px;font-size:12px;color:#b66548;right:529.45px;">-19%</div>
<div style="top:251.70px;line-height:20px;font-size:12px;color:#b66548;right:458.20px;">2,63K</div>
<div style="top:269.70px;line-height:20px;font-size:12px;color:#b66548;right:458.20px;">-20%</div>
<div style="top:251.70px;line-height:20px;font-size:12px;color:#b66548;right:386.95px;">3,98K</div>
<div style="top:269.70px;line-height:20px;font-size:12px;color:#b66548;right:386.95px;">0%</div>
<div style="top:251.70px;line-height:20px;font-size:12px;color:#557590;right:315.70px;">3,41K</div>
<div style="top:269.70px;line-height:20px;font-size:12px;color:#557590;right:315.70px;">34%</div>
<div style="top:251.70px;line-height:20px;font-size:12px;color:#557590;right:244.45px;">4,24K</div>
<div style="top:269.70px;line-height:20px;font-size:12px;color:#557590;right:244.45px;">1%</div>
<div style="top:251.70px;line-height:20px;font-size:12px;color:#557590;right:173.20px;">2,67K</div>
<div style="top:269.70px;line-height:20px;font-size:12px;color:#557590;right:173.20px;">2%</div>
<div style="top:251.70px;line-height:20px;font-size:12px;color:#557590;right:101.95px;">4,92K</div>
<div style="top:269.70px;line-height:20px;font-size:12px;color:#557590;right:101.95px;">23%</div>
<div style="top:251.70px;line-height:20px;font-size:12px;color:#557590;right:30.70px;">3,54K</div>
<div style="top:269.70px;line-height:20px;font-size:12px;color:#557590;right:30.70px;">4%</div>
<div style="top:296.80px;line-height:20px;font-size:12px;color:#777;left:453.00px;width:800px;text-align:center;">4</div>
<div style="top:296.80px;line-height:20px;font-size:12px;color:#777;left:873.00px;letter-spacing:0.33px;">PropertyMgmtBaseFee</div>
<div style="top:287.70px;line-height:20px;font-size:12px;color:#557590;right:814.45px;">4,71K</div>
<div style="top:305.70px;line-height:20px;font-size:12px;color:#557590;right:814.45px;">0%</div>
<div style="top:287.70px;line-height:20px;font-size:12px;color:#557590;right:743.20px;">2,94K</div>
<div style="top:305.70px;line-height:20px;font-size:12px;color:#557590;right:743.20px;">62%</div>
<div style="top:287.70px;line-height:20px;font-size:12px;color:#b66548;right:671.95px;">1,68K</div>
<div style="top:305.70px;line-height:20px;font-size:12px;color:#b66548;right:671.95px;">-48%</div>
<div style="top:287.70px;line-height:20px;font-size:12px;color:#b66548;right:600.70px;">2,28K</div>
<div style="top:305.70px;line-height:20px;font-size:12px;color:#b66548;right:600.70px;">-34%</div>
<div style="top:287.70px;line-height:20px;font-size:12px;color:#b66548;right:529.45px;">4,33K</div>
<div style="top:305.70px;line-height:20px;font-size:12px;color:#b66548;right:529.45px;">-8%</div>
<div style="top:287.70px;line-height:20px;font-size:12px;color:#557590;right:458.20px;">4,38K</div>
<div style="top:305.70px;line-height:20px;font-size:12px;color:#557590;right:458.20px;">49%</div>
<div style="top:287.70px;line-height:20px;font-size:12px;color:#557590;right:386.95px;">4,27K</div>
<div style="top:305.70px;line-height:20px;font-size:12px;color:#557590;right:386.95px;">155%</div>
<div style="top:287.70px;line-height:20px;font-size:12px;color:#557590;right:315.70px;">3,21K</div>
<div style="top:305.70px;line-height:20px;font-size:12px;color:#557590;right:315.70px;">41%</div>
<div style="top:287.70px;line-height:20px;font-size:12px;color:#b66548;right:244.45px;">3,79K</div>
<div style="top:305.70px;line-height:20px;font-size:12px;color:#b66548;right:244.45px;">-12%</div>
<div style="top:287.70px;line-height:20px;font-size:12px;color:#b66548;right:173.20px;">3,76K</div>
<div style="top:305.70px;line-height:20px;font-size:12px;color:#b66548;right:173.20px;">-14%</div>
<div style="top:287.70px;line-height:20px;font-size:12px;color:#b66548;right:101.95px;">3,30K</div>
<div style="top:305.70px;line-height:20px;font-size:12px;color:#b66548;right:101.95px;">-23%</div>
<div style="top:287.70px;line-height:20px;font-size:12px;color:#557590;right:30.70px;">3,58K</div>
<div style="top:305.70px;line-height:20px;font-size:12px;color:#557590;right:30.70px;">12%</div>
<div style="top:332.80px;line-height:20px;font-size:12px;color:#777;left:453.00px;width:800px;text-align:center;">5</div>
<div style="top:332.80px;line-height:20px;font-size:12px;color:#777;left:873.00px;letter-spacing:0.33px;">Parking-Repairs</div>
<div style="top:323.70px;line-height:20px;font-size:12px;color:#557590;right:814.45px;">2,77K</div>
<div style="top:341.70px;line-height:20px;font-size:12px;color:#557590;right:814.45px;">13%</div>
<div style="top:323.70px;line-height:20px;font-size:12px;color:#557590;right:743.20px;">3,69K</div>
<div style="top:341.70px;line-height:20px;font-size:12px;color:#557590;right:743.20px;">14%</div>
<div style="top:323.70px;line-height:20px;font-size:12px;color:#557590;right:671.95px;">4,48K</div>
<div style="top:341.70px;line-height:20px;font-size:12px;color:#557590;right:671.95px;">104%</div>
<div style="top:323.70px;line-height:20px;font-size:12px;color:#b66548;right:600.70px;">2,39K</div>
<div style="top:341.70px;line-height:20px;font-size:12px;color:#b66548;right:600.70px;">-4%</div>
<div style="top:323.70px;line-height:20px;font-size:12px;color:#557590;right:529.45px;">3,34K</div>
<div style="top:341.70px;line-height:20px;font-size:12px;color:#557590;right:529.45px;">21%</div>
<div style="top:323.70px;line-height:20px;font-size:12px;color:#b66548;right:458.20px;">2,82K</div>
<div style="top:341.70px;line-height:20px;font-size:12px;color:#b66548;right:458.20px;">-24%</div>
<div style="top:323.70px;line-height:20px;font-size:12px;color:#b66548;right:386.95px;">3,35K</div>
<div style="top:341.70px;line-height:20px;font-size:12px;color:#b66548;right:386.95px;">-25%</div>
<div style="top:323.70px;line-height:20px;font-size:12px;color:#557590;right:315.70px;">2,45K</div>
<div style="top:341.70px;line-height:20px;font-size:12px;color:#557590;right:315.70px;">3%</div>
<div style="top:323.70px;line-height:20px;font-size:12px;color:#557590;right:244.45px;">3,40K</div>
<div style="top:341.70px;line-height:20px;font-size:12px;color:#557590;right:244.45px;">2%</div>
<div style="top:323.70px;line-height:20px;font-size:12px;color:#557590;right:173.20px;">3,55K</div>
<div style="top:341.70px;line-height:20px;font-size:12px;color:#557590;right:173.20px;">26%</div>
<div style="top:323.70px;line-height:20px;font-size:12px;color:#b66548;right:101.95px;">2,82K</div>
<div style="top:341.70px;line-height:20px;font-size:12px;color:#b66548;right:101.95px;">-16%</div>
<div style="top:323.70px;line-height:20px;font-size:12px;color:#557590;right:30.70px;">3,43K</div>
<div style="top:341.70px;line-height:20px;font-size:12px;color:#557590;right:30.70px;">40%</div>
<div style="top:368.80px;line-height:20px;font-size:12px;color:#777;left:453.00px;width:800px;text-align:center;">6</div>
<div style="top:368.80px;line-height:20px;font-size:12px;color:#777;left:873.00px;letter-spacing:0.33px;">Water&amp;Sewer</div>
<div style="top:359.70px;line-height:20px;font-size:12px;color:#557590;right:814.45px;">2,69K</div>
<div style="top:377.70px;line-height:20px;font-size:12px;color:#557590;right:814.45px;">54%</div>
<div style="top:359.70px;line-height:20px;font-size:12px;color:#b66548;right:743.20px;">3,65K</div>
<div style="top:377.70px;line-height:20px;font-size:12px;color:#b66548;right:743.20px;">-15%</div>
<div style="top:359.70px;line-height:20px;font-size:12px;color:#557590;right:671.95px;">3,29K</div>
<div style="top:377.70px;line-height:20px;font-size:12px;color:#557590;right:671.95px;">11%</div>
<div style="top:359.70px;line-height:20px;font-size:12px;color:#b66548;right:600.70px;">2,58K</div>
<div style="top:377.70px;line-height:20px;font-size:12px;color:#b66548;right:600.70px;">-38%</div>
<div style="top:359.70px;line-height:20px;font-size:12px;color:#557590;right:529.45px;">4,27K</div>
<div style="top:377.70px;line-height:20px;font-size:12px;color:#557590;right:529.45px;">59%</div>
<div style="top:359.70px;line-height:20px;font-size:12px;color:#b66548;right:458.20px;">3,18K</div>
<div style="top:377.70px;line-height:20px;font-size:12px;color:#b66548;right:458.20px;">-13%</div>
<div style="top:359.70px;line-height:20px;font-size:12px;color:#557590;right:386.95px;">4,49K</div>
<div style="top:377.70px;line-height:20px;font-size:12px;color:#557590;right:386.95px;">37%</div>
<div style="top:359.70px;line-height:20px;font-size:12px;color:#557590;right:315.70px;">4,06K</div>
<div style="top:377.70px;line-height:20px;font-size:12px;color:#557590;right:315.70px;">58%</div>
<div style="top:359.70px;line-height:20px;font-size:12px;color:#b66548;right:244.45px;">3,74K</div>
<div style="top:377.70px;line-height:20px;font-size:12px;color:#b66548;right:244.45px;">-12%</div>
<div style="top:359.70px;line-height:20px;font-size:12px;color:#557590;right:173.20px;">4,02K</div>
<div style="top:377.70px;line-height:20px;font-size:12px;color:#557590;right:173.20px;">27%</div>
<div style="top:359.70px;line-height:20px;font-size:12px;color:#b66548;right:101.95px;">3,07K</div>
<div style="top:377.70px;line-height:20px;font-size:12px;color:#b66548;right:101.95px;">-32%</div>
<div style="top:359.70px;line-height:20px;font-size:12px;color:#b66548;right:30.70px;">3,43K</div>
<div style="top:377.70px;line-height:20px;font-size:12px;color:#b66548;right:30.70px;">-16%</div>
<div style="top:404.80px;line-height:20px;font-size:12px;color:#777;left:453.00px;width:800px;text-align:center;">7</div>
<div style="top:404.80px;line-height:20px;font-size:12px;color:#777;left:873.00px;letter-spacing:0.33px;">TransactionMgmt-Sala..</div>
<div style="top:395.70px;line-height:20px;font-size:12px;color:#557590;right:814.45px;">2,08K</div>
<div style="top:413.70px;line-height:20px;font-size:12px;color:#557590;right:814.45px;">20%</div>
<div style="top:395.70px;line-height:20px;font-size:12px;color:#557590;right:743.20px;">4,29K</div>
<div style="top:413.70px;line-height:20px;font-size:12px;color:#557590;right:743.20px;">94%</div>
<div style="top:395.70px;line-height:20px;font-size:12px;color:#b66548;right:671.95px;">2,15K</div>
<div style="top:413.70px;line-height:20px;font-size:12px;color:#b66548;right:671.95px;">-18%</div>
<div style="top:395.70px;line-height:20px;font-size:12px;color:#b66548;right:600.70px;">1,04K</div>
<div style="top:413.70px;line-height:20px;font-size:12px;color:#b66548;right:600.70px;">-48%</div>
<div style="top:395.70px;line-height:20px;font-size:12px;color:#557590;right:529.45px;">3,09K</div>
<div style="top:413.70px;line-height:20px;font-size:12px;color:#557590;right:529.45px;">49%</div>
<div style="top:395.70px;line-height:20px;font-size:12px;color:#b66548;right:458.20px;">4,03K</div>
<div style="top:413.70px;line-height:20px;font-size:12px;color:#b66548;right:458.20px;">-6%</div>
<div style="top:395.70px;line-height:20px;font-size:12px;color:#557590;right:386.95px;">3,25K</div>
<div style="top:413.70px;line-height:20px;font-size:12px;color:#557590;right:386.95px;">52%</div>
<div style="top:395.70px;line-height:20px;font-size:12px;color:#557590;right:315.70px;">3,70K</div>
<div style="top:413.70px;line-height:20px;font-size:12px;color:#557590;right:315.70px;">255%</div>
<div style="top:395.70px;line-height:20px;font-size:12px;color:#557590;right:244.45px;">3,56K</div>
<div style="top:413.70px;line-height:20px;font-size:12px;color:#557590;right:244.45px;">15%</div>
<div style="top:395.70px;line-height:20px;font-size:12px;color:#b66548;right:173.20px;">3,15K</div>
<div style="top:413.70px;line-height:20px;font-size:12px;color:#b66548;right:173.20px;">-22%</div>
<div style="top:395.70px;line-height:20px;font-size:12px;color:#557590;right:101.95px;">3,26K</div>
<div style="top:413.70px;line-height:20px;font-size:12px;color:#557590;right:101.95px;">0%</div>
<div style="top:395.70px;line-height:20px;font-size:12px;color:#557590;right:30.70px;">4,43K</div>
<div style="top:413.70px;line-height:20px;font-size:12px;color:#557590;right:30.70px;">20%</div>
<div style="top:440.80px;line-height:20px;font-size:12px;color:#777;left:453.00px;width:800px;text-align:center;">8</div>
<div style="top:440.80px;line-height:20px;font-size:12px;color:#777;left:873.00px;letter-spacing:0.33px;">ProjectManagement-G..</div>
<div style="top:431.70px;line-height:20px;font-size:12px;color:#557590;right:814.45px;">1,80K</div>
<div style="top:449.70px;line-height:20px;font-size:12px;color:#557590;right:814.45px;">86%</div>
<div style="top:431.70px;line-height:20px;font-size:12px;color:#b66548;right:743.20px;">1,55K</div>
<div style="top:449.70px;line-height:20px;font-size:12px;color:#b66548;right:743.20px;">-1%</div>
<div style="top:431.70px;line-height:20px;font-size:12px;color:#557590;right:671.95px;">1,72K</div>
<div style="top:449.70px;line-height:20px;font-size:12px;color:#557590;right:671.95px;">18%</div>
<div style="top:431.70px;line-height:20px;font-size:12px;color:#557590;right:600.70px;">0,81K</div>
<div style="top:449.70px;line-height:20px;font-size:12px;color:#557590;right:600.70px;">39%</div>
<div style="top:431.70px;line-height:20px;font-size:12px;color:#b66548;right:529.45px;">1,70K</div>
<div style="top:449.70px;line-height:20px;font-size:12px;color:#b66548;right:529.45px;">-6%</div>
<div style="top:431.70px;line-height:20px;font-size:12px;color:#557590;right:458.20px;">1,91K</div>
<div style="top:449.70px;line-height:20px;font-size:12px;color:#557590;right:458.20px;">24%</div>
<div style="top:431.70px;line-height:20px;font-size:12px;color:#b66548;right:386.95px;">1,56K</div>
<div style="top:449.70px;line-height:20px;font-size:12px;color:#b66548;right:386.95px;">-9%</div>
<div style="top:431.70px;line-height:20px;font-size:12px;color:#557590;right:315.70px;">1,49K</div>
<div style="top:449.70px;line-height:20px;font-size:12px;color:#557590;right:315.70px;">84%</div>
<div style="top:431.70px;line-height:20px;font-size:12px;color:#557590;right:244.45px;">1,88K</div>
<div style="top:449.70px;line-height:20px;font-size:12px;color:#557590;right:244.45px;">11%</div>
<div style="top:431.70px;line-height:20px;font-size:12px;color:#b66548;right:173.20px;">1,88K</div>
<div style="top:449.70px;line-height:20px;font-size:12px;color:#b66548;right:173.20px;">-2%</div>
<div style="top:431.70px;line-height:20px;font-size:12px;color:#557590;right:101.95px;">1,88K</div>
<div style="top:449.70px;line-height:20px;font-size:12px;color:#557590;right:101.95px;">20%</div>
<div style="top:431.70px;line-height:20px;font-size:12px;color:#557590;right:30.70px;">2,19K</div>
<div style="top:449.70px;line-height:20px;font-size:12px;color:#557590;right:30.70px;">47%</div>
<div style="left:800px;top:469px;width:1079px;height:20px;overflow:hidden;">
<div style="top:7.00px;line-height:20px;font-size:12px;color:#333;left:5.00px;-webkit-text-stroke:0.3px #333;">Gr. 2</div>
<div style="top:2.00px;line-height:20px;font-size:12px;color:#777;left:-347.00px;width:800px;text-align:center;">1</div>
<div style="top:2.00px;line-height:20px;font-size:12px;color:#777;left:73.00px;">Gas</div>
<div style="top:-1.30px;line-height:20px;font-size:12px;color:#557590;right:789.45px;">3,81K</div>
<div style="top:-1.30px;line-height:20px;font-size:12px;color:#557590;right:718.20px;">5,02K</div>
<div style="top:-1.30px;line-height:20px;font-size:12px;color:#b66548;right:646.95px;">4,99K</div>
<div style="top:-1.30px;line-height:20px;font-size:12px;color:#557590;right:575.70px;">5,47K</div>
<div style="top:-1.30px;line-height:20px;font-size:12px;color:#557590;right:504.45px;">5,14K</div>
<div style="top:-1.30px;line-height:20px;font-size:12px;color:#557590;right:433.20px;">5,53K</div>
<div style="top:-1.30px;line-height:20px;font-size:12px;color:#b66548;right:361.95px;">3,86K</div>
<div style="top:-1.30px;line-height:20px;font-size:12px;color:#b66548;right:290.70px;">3,32K</div>
<div style="top:-1.30px;line-height:20px;font-size:12px;color:#b66548;right:219.45px;">3,65K</div>
<div style="top:-1.30px;line-height:20px;font-size:12px;color:#557590;right:148.20px;">7,09K</div>
<div style="top:-1.30px;line-height:20px;font-size:12px;color:#557590;right:76.95px;">4,90K</div>
<div style="top:-1.30px;line-height:20px;font-size:12px;color:#557590;right:5.70px;">3,44K</div>
</div>
<div style="top:514.70px;line-height:30px;font-size:18.7px;color:#444;left:6.80px;font-weight:200;letter-spacing:0.183px;-webkit-text-stroke:0.3px currentColor;">Budżet vs Wydatki. Budget owner:</div>
<div style="top:514.70px;line-height:30px;font-size:18.7px;color:#5b9e56;left:336.60px;letter-spacing:0.155px;-webkit-text-stroke:0.2px #5b9e56;">Mateusz Urbaniak</div>
<div style="top:552.80px;line-height:20px;font-size:14.2px;color:#333;left:9.20px;letter-spacing:0.182px;-webkit-text-stroke:0.22px #333;">Description</div>
<div style="top:552.80px;line-height:20px;font-size:14.2px;color:#333;left:206.00px;-webkit-text-stroke:0.22px #333;">Budżet</div>
<div style="top:552.80px;line-height:20px;font-size:14.2px;color:#333;right:1509.50px;-webkit-text-stroke:0.22px #333;">Wydatki</div>
<div style="top:552.80px;line-height:20px;font-size:14.2px;color:#333;right:1429.20px;-webkit-text-stroke:0.22px #333;">Różnica</div>
<div style="top:574.30px;line-height:20px;font-size:12px;color:#777;left:9.60px;letter-spacing:0.381px;">Electricity</div>
<div style="top:574.30px;line-height:20px;font-size:12px;color:#777;left:206.00px;">$151 834,34</div>
<div style="top:574.30px;line-height:20px;font-size:12px;color:#777;right:1509.50px;">$ 140 025,88</div>
<div style="top:574.30px;line-height:20px;font-size:12px;color:#777;right:1429.20px;">$11 808,46</div>
<div style="top:594.30px;line-height:20px;font-size:12px;color:#777;left:9.60px;letter-spacing:0.218px;">CleaningSupplies&amp;Mat</div>
<div style="top:594.30px;line-height:20px;font-size:12px;color:#777;left:206.00px;">$10 637,81</div>
<div style="top:594.30px;line-height:20px;font-size:12px;color:#777;right:1509.50px;">$ 10 263,51</div>
<div style="top:594.30px;line-height:20px;font-size:12px;color:#777;right:1429.20px;">$374,31</div>
<div style="top:614.30px;line-height:20px;font-size:12px;color:#777;left:9.60px;letter-spacing:0.347px;">FacilityInsurance-Monthly</div>
<div style="top:614.30px;line-height:20px;font-size:12px;color:#777;left:206.00px;">$4 563,98</div>
<div style="top:614.30px;line-height:20px;font-size:12px;color:#777;right:1509.50px;">$ 4 657,06</div>
<div style="top:614.30px;line-height:20px;font-size:12px;color:#777;right:1429.20px;">-$93,08</div>
<div style="top:634.30px;line-height:20px;font-size:12px;color:#777;left:9.60px;letter-spacing:0.443px;">FacilityCAM-Monthly</div>
<div style="top:634.30px;line-height:20px;font-size:12px;color:#777;left:206.00px;">$35 704,24</div>
<div style="top:634.30px;line-height:20px;font-size:12px;color:#777;right:1509.50px;">$ 39 635,93</div>
<div style="top:634.30px;line-height:20px;font-size:12px;color:#777;right:1429.20px;">-$3 931,69</div>
<div style="top:654.30px;line-height:20px;font-size:12px;color:#777;left:9.60px;letter-spacing:0.376px;">FacilityBaseRent</div>
<div style="top:654.30px;line-height:20px;font-size:12px;color:#777;left:206.00px;">$708 203,02</div>
<div style="top:654.30px;line-height:20px;font-size:12px;color:#777;right:1509.50px;">$ 788 720,97</div>
<div style="top:654.30px;line-height:20px;font-size:12px;color:#777;right:1429.20px;">-$80 517,95</div>
<div style="top:674.30px;line-height:20px;font-size:12px;color:#777;left:9.60px;letter-spacing:0.148px;">ContractCleaningService</div>
<div style="top:674.30px;line-height:20px;font-size:12px;color:#777;left:206.00px;">$84 905,10</div>
<div style="top:674.30px;line-height:20px;font-size:12px;color:#777;right:1509.50px;">$ 96 246,58</div>
<div style="top:674.30px;line-height:20px;font-size:12px;color:#777;right:1429.20px;">-$11 341,48</div>
<div style="top:699.40px;line-height:20px;font-size:12px;color:#777;left:131.00px;width:800px;text-align:center;">5,00%</div>
<div style="top:699.40px;line-height:20px;font-size:12px;color:#777;left:198.00px;width:800px;text-align:center;">0,00%</div>
<div style="top:518.80px;line-height:20px;font-size:12px;color:#888;left:630.67px;width:800px;text-align:center;">1 kw.</div>
<div style="top:518.80px;line-height:20px;font-size:12px;color:#888;left:878.62px;width:800px;text-align:center;">2 kw.</div>
<div style="top:518.80px;line-height:20px;font-size:12px;color:#888;left:1126.58px;width:800px;text-align:center;">3 kw.</div>
<div style="top:518.80px;line-height:20px;font-size:12px;color:#888;left:1374.53px;width:800px;text-align:center;">4 kw.</div>
<div style="top:547.70px;line-height:20px;font-size:12px;color:#858585;right:1004.20px;">120K</div>
<div style="top:832.60px;line-height:20px;font-size:12px;color:#858585;right:1004.20px;">40K</div>
<div style="top:903.80px;line-height:20px;font-size:12px;color:#858585;right:1004.20px;">20K</div>
<div style="top:965.80px;line-height:20px;font-size:12px;color:#858585;right:1004.20px;">0K</div>
<div style="left:949.2px;top:991px;width:0;height:0;"><div style="left:-100px;top:-10px;width:100px;line-height:20px;text-align:right;font-size:11.5px;color:#868686;transform-origin:100% 50%;transform:rotate(-90deg);">sty</div></div>
<div style="left:1031.9px;top:991px;width:0;height:0;"><div style="left:-100px;top:-10px;width:100px;line-height:20px;text-align:right;font-size:11.5px;color:#868686;transform-origin:100% 50%;transform:rotate(-90deg);">lut</div></div>
<div style="left:1114.5px;top:991px;width:0;height:0;"><div style="left:-100px;top:-10px;width:100px;line-height:20px;text-align:right;font-size:11.5px;color:#868686;transform-origin:100% 50%;transform:rotate(-90deg);">mar</div></div>
<div style="left:1197.2px;top:991px;width:0;height:0;"><div style="left:-100px;top:-10px;width:100px;line-height:20px;text-align:right;font-size:11.5px;color:#868686;transform-origin:100% 50%;transform:rotate(-90deg);">kwi</div></div>
<div style="left:1279.8px;top:991px;width:0;height:0;"><div style="left:-100px;top:-10px;width:100px;line-height:20px;text-align:right;font-size:11.5px;color:#868686;transform-origin:100% 50%;transform:rotate(-90deg);">maj</div></div>
<div style="left:1362.5px;top:991px;width:0;height:0;"><div style="left:-100px;top:-10px;width:100px;line-height:20px;text-align:right;font-size:11.5px;color:#868686;transform-origin:100% 50%;transform:rotate(-90deg);">cze</div></div>
<div style="left:1445.1px;top:991px;width:0;height:0;"><div style="left:-100px;top:-10px;width:100px;line-height:20px;text-align:right;font-size:11.5px;color:#868686;transform-origin:100% 50%;transform:rotate(-90deg);">lip</div></div>
<div style="left:1527.8px;top:991px;width:0;height:0;"><div style="left:-100px;top:-10px;width:100px;line-height:20px;text-align:right;font-size:11.5px;color:#868686;transform-origin:100% 50%;transform:rotate(-90deg);">sie</div></div>
<div style="left:1610.4px;top:991px;width:0;height:0;"><div style="left:-100px;top:-10px;width:100px;line-height:20px;text-align:right;font-size:11.5px;color:#868686;transform-origin:100% 50%;transform:rotate(-90deg);">wrz</div></div>
<div style="left:1693.1px;top:991px;width:0;height:0;"><div style="left:-100px;top:-10px;width:100px;line-height:20px;text-align:right;font-size:11.5px;color:#868686;transform-origin:100% 50%;transform:rotate(-90deg);">paź</div></div>
<div style="left:1775.7px;top:991px;width:0;height:0;"><div style="left:-100px;top:-10px;width:100px;line-height:20px;text-align:right;font-size:11.5px;color:#868686;transform-origin:100% 50%;transform:rotate(-90deg);">lis</div></div>
<div style="left:1858.4px;top:991px;width:0;height:0;"><div style="left:-100px;top:-10px;width:100px;line-height:20px;text-align:right;font-size:11.5px;color:#868686;transform-origin:100% 50%;transform:rotate(-90deg);">gru</div></div>
<div style="top:1045.60px;line-height:20px;font-size:15.2px;color:#333;left:-0.50px;letter-spacing:0.147px;font-family:'Liberation Sans','DejaVu Sans',sans-serif;">Target View</div>
<div style="top:1045.60px;line-height:20px;font-size:15.2px;color:#333;left:99.50px;letter-spacing:0.101px;font-family:'Liberation Sans','DejaVu Sans',sans-serif;">Target view 2</div>
<div style="top:1045.60px;line-height:20px;font-size:15.2px;color:#333;left:210.00px;letter-spacing:0.152px;font-family:'Liberation Sans','DejaVu Sans',sans-serif;">Budget owners</div>
<div style="top:1045.60px;line-height:20px;font-size:15.2px;color:#333;left:332.70px;letter-spacing:0.192px;font-family:'Liberation Sans','DejaVu Sans',sans-serif;">Pareto</div>
<div style="top:1045.60px;line-height:20px;font-size:15.2px;color:#333;left:395.80px;letter-spacing:-0.256px;font-family:'Liberation Sans','DejaVu Sans',sans-serif;">YOY Owners</div>
<div style="top:1045.60px;line-height:20px;font-size:15.2px;color:#333;left:500.20px;letter-spacing:0.123px;font-family:'Liberation Sans','DejaVu Sans',sans-serif;">% List</div>
<div style="top:1045.60px;line-height:20px;font-size:15.2px;color:#333;left:560.90px;letter-spacing:-0.107px;font-family:'Liberation Sans','DejaVu Sans',sans-serif;">YOY Table</div>
<div style="top:1045.60px;line-height:20px;font-size:15.2px;color:#333;left:650.90px;letter-spacing:0.142px;font-family:'Liberation Sans','DejaVu Sans',sans-serif;">Y trend</div>
<div style="top:1044.80px;line-height:20px;font-size:15px;color:#111;left:737.30px;font-weight:bold;letter-spacing:-0.26px;font-family:'Liberation Sans','DejaVu Sans',sans-serif;">Dashboard 1</div>
<div style="top:1045.60px;line-height:20px;font-size:15.2px;color:#333;left:859.00px;letter-spacing:0.03px;font-family:'Liberation Sans','DejaVu Sans',sans-serif;">Dashboard 2</div>
<div style="left:620px;top:575px;width:436px;height:221px;background:#fff;border:1px solid #d0d0d0;box-shadow:1px 1px 4px rgba(0,0,0,0.42);"></div>
<div style="left:621px;top:576px;width:436px;height:61px;background:#f4f4f4;"></div>
<div style="left:982px;top:579px;width:34px;height:30px;background:#e5e5e5;"></div>
<div style="left:648.60px;top:582.00px;line-height:24px;font-size:17.5px;color:#444;font-family:'Liberation Sans','DejaVu Sans',sans-serif;letter-spacing:-0.35px;">Keep Only</div>
<div style="left:762.00px;top:582.00px;line-height:24px;font-size:17.5px;color:#444;font-family:'Liberation Sans','DejaVu Sans',sans-serif;letter-spacing:-0.3px;">Exclude</div>
<div style="left:631.30px;top:612.60px;line-height:24px;font-size:13.6px;color:#444;font-weight:bold;">4</div>
<div style="left:644.30px;top:612.60px;line-height:24px;font-size:13.6px;color:#666;letter-spacing:-0.036px;">items selected</div>
<div style="left:750.00px;top:612.60px;line-height:24px;font-size:13.6px;color:#666;">·</div>
<div style="left:762.00px;top:612.60px;line-height:24px;font-size:13.6px;color:#666;letter-spacing:0.162px;">SUM of AGG(% Budg vs Spend):</div>
<div style="left:987.40px;top:612.60px;line-height:24px;font-size:13.6px;color:#444;font-weight:bold;letter-spacing:-0.467px;">-37,78%</div>
<div style="left:630.00px;top:646.70px;line-height:24px;font-size:15.8px;color:#8a8a8a;">Description:</div>
<div style="left:773.00px;top:646.70px;line-height:24px;font-size:16px;color:#333;letter-spacing:0.25px;">FacilityInsurance-Monthly</div>
<div style="left:630.00px;top:670.70px;line-height:24px;font-size:15.8px;color:#8a8a8a;">Budżet:</div>
<div style="left:773.00px;top:670.70px;line-height:24px;font-size:16px;color:#333;word-spacing:-2.2px;">$4 563,98</div>
<div style="left:630.00px;top:694.70px;line-height:24px;font-size:15.8px;color:#8a8a8a;">Wydatki:</div>
<div style="left:773.00px;top:694.70px;line-height:24px;font-size:16px;color:#333;word-spacing:-2.2px;">$ 4 657,06</div>
<div style="left:630.00px;top:718.70px;line-height:24px;font-size:15.8px;color:#8a8a8a;">Over budget?:</div>
<div style="left:773.00px;top:718.70px;line-height:24px;font-size:16px;color:#333;word-spacing:-2.2px;">True</div>
<div style="left:630.00px;top:742.70px;line-height:24px;font-size:15.8px;color:#8a8a8a;letter-spacing:-0.1px;">% Budg vs Spend:</div>
<div style="left:773.00px;top:742.70px;line-height:24px;font-size:16px;color:#333;word-spacing:-2.2px;">-2,04%</div>
<div style="left:630.00px;top:766.70px;line-height:24px;font-size:15.8px;color:#8a8a8a;">Różnica:</div>
<div style="left:773.00px;top:766.70px;line-height:24px;font-size:16px;color:#333;word-spacing:-2.2px;">-$93,08</div>
<svg class="layer" width="1904" height="1081" viewBox="0 0 1904 1081" fill="none" stroke="#555" stroke-width="1.3"><path d="M630.4 596l3.2 3.3 6.6-8.2"/><path d="M745.2 590l9.6 8.8M754.8 590l-9.6 8.8"/><g transform="translate(848 593.4) rotate(38)" stroke="#666" stroke-width="1.05"><path d="M2.6 -3.2v6.2a2.6 2.6 0 0 1-5.2 0v-7a1.9 1.9 0 0 1 3.8 0v6.4a0.9 0.9 0 0 1-1.8 0v-5.4"/></g><path d="M876 589.7h3.4M876 594h7.6M876 597.8h10.2M885.1 589.1v6.3M882.5 592.3h5.3" stroke-width="1.5" stroke="#444"/><path d="M909.8 589.7h10.3M909.8 593.9h6.3M909.8 597.8h3.2M919.5 591.8v6.3M917.1 596l2.4 2.5 2.4-2.5" stroke-width="1.5" stroke="#444"/><circle cx="954.5" cy="592.3" r="3.5" stroke-width="1.1"/><circle cx="958" cy="595.1" r="3.5" stroke-width="1.1"/><path d="M954.3 595.8l4-4.4" stroke-width="1"/><path d="M969.2 592.8h6.8l-3.4 4.2z" fill="#222" stroke="none"/><path d="M992.8 589.5h2.6M996.1 589.5h2.6M999.4 589.5h2.6M1002.7 589.5h2.5M992.8 591.7h2.6M996.1 591.7h2.6M999.4 591.7h2.6M1002.7 591.7h2.5M992.8 593.9h2.6M996.1 593.9h2.6M999.4 593.9h2.6M1002.7 593.9h2.5M992.8 596.1h2.6M996.1 596.1h2.6M999.4 596.1h2.6M1002.7 596.1h2.5M992.8 598.3h2.6M996.1 598.3h2.6M999.4 598.3h2.6M1002.7 598.3h2.5" stroke="#333" stroke-width="1.1"/></svg>
<div style="left:1015px;top:602px;width:88px;height:22px;background:#fff;border:1px solid #7a7a7a;box-shadow:2px 2px 3px rgba(0,0,0,0.3);"></div>
<div style="left:1021.30px;top:603.00px;line-height:24px;font-size:14.3px;color:#505050;letter-spacing:0.056px;font-family:'Liberation Sans','DejaVu Sans',sans-serif;">View Data...</div>
</div>
</body></html>
